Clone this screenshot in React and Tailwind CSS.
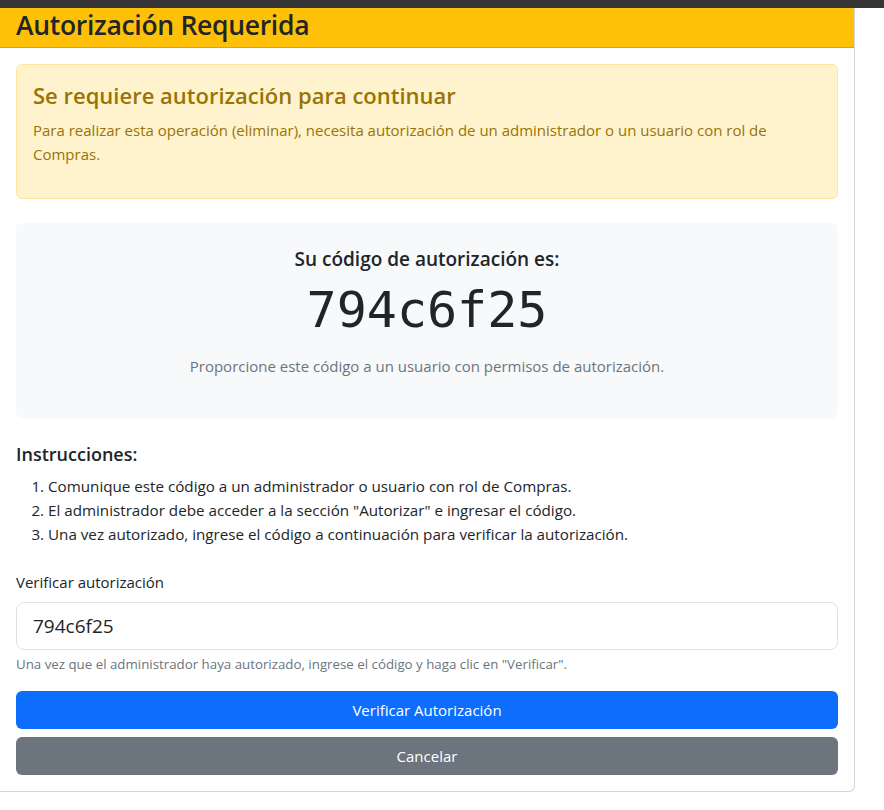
import React from "react";

const sans = "font-['Segoe_UI','Open_Sans','Noto_Sans',sans-serif]";

const steps = [
	"Comunique este código a un administrador o usuario con rol de Compras.",
	'El administrador debe acceder a la sección "Autorizar" e ingresar el código.',
	"Una vez autorizado, ingrese el código a continuación para verificar la autorización.",
];

export default function App() {
	const code = "794c6f25";

	return (
		<div className={`min-h-[810px] w-[884px] bg-white text-[#212529] ${sans}`}>
			{/* top strip */}
			<div className="h-2 bg-[#363636]" />

			<div className="w-[855px] border-r border-b border-[#d6d6d6] rounded-br-md bg-white">
				{/* header */}
				<div className="h-[40px] bg-[#ffc107] border-b border-[#dca604] px-4 flex items-center">
					<h3 className="text-[26.5px] font-semibold leading-none tracking-[-0.3px] -mt-1">
						Autorización Requerida
					</h3>
				</div>

				<div className="p-4">
					{/* warning */}
					<div className="mb-6 rounded-md border border-[#ffe69c] bg-[#fff3cd] p-4 text-[#997404]">
						<h4 className="text-[22px] font-semibold leading-[29px] mb-2">
							Se requiere autorización para continuar
						</h4>
						<p className="text-[15px] leading-6 mb-4">
							Para realizar esta operación (eliminar), necesita autorización de un
							administrador o un usuario con rol de Compras.
						</p>
					</div>

					{/* code box */}
					<div className="mb-6 rounded-md bg-[#f8f9fa] p-6 text-center">
						<h5 className="text-[19px] font-semibold leading-6 mb-2">
							Su código de autorización es:
						</h5>
						<div className="font-['DejaVu_Sans_Mono',monospace] text-[50px] leading-[59px] mb-4 pt-[2px]">
							{code}
						</div>
						<p className="text-[15px] leading-6 text-[#6c757d] mb-4 -mt-[2px]">
							Proporcione este código a un usuario con permisos de autorización.
						</p>
					</div>

					{/* instructions */}
					<h5 className="text-[18px] font-semibold leading-6 mb-2 mt-[2px]">Instrucciones:</h5>
					<ol className="list-decimal pl-8 mb-6 text-[15.2px] leading-6">
						{steps.map((s) => (
							<li key={s}>{s}</li>
						))}
					</ol>

					{/* verify */}
					<label className="block text-[15px] leading-6 mb-2">Verificar autorización</label>
					<input
						type="text"
						defaultValue={code}
						className="block w-full h-12 rounded-lg border border-[#dee2e6] px-4 text-[19px] text-[#212529] outline-none"
					/>
					<div className="mt-1 mb-4 text-[13.3px] leading-[21px] text-[#6c757d]">
						Una vez que el administrador haya autorizado, ingrese el código y haga clic en
						"Verificar".
					</div>

					<button className="block w-full h-[38px] rounded-md bg-[#0d6efd] text-white text-[15px] mb-2">
						Verificar Autorización
					</button>
					<button className="block w-full h-[38px] rounded-md bg-[#6c757d] text-white text-[15px]">
						Cancelar
					</button>
				</div>
			</div>
		</div>
	);
}
